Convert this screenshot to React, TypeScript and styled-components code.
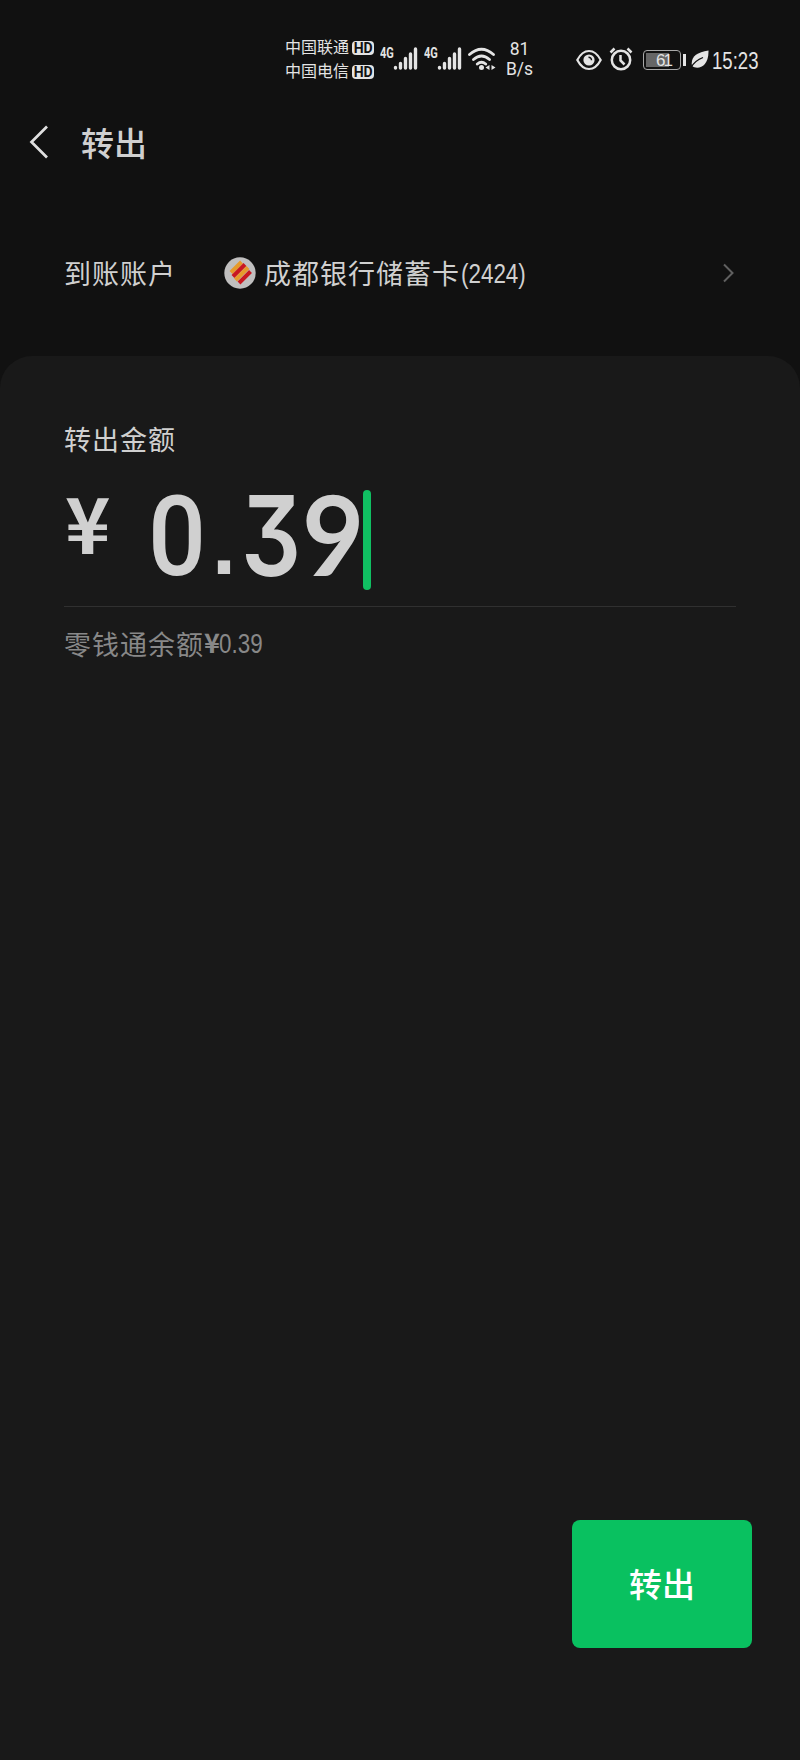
import React from 'react';
import styled, { createGlobalStyle } from 'styled-components';

const GlobalStyle = createGlobalStyle`
  * { box-sizing: border-box; }
  body {
    margin: 0;
    background: #111111;
    color: #d0d0d0;
    font-family: Roboto, "Noto Sans CJK SC", sans-serif;
  }
  svg { display: block; flex: none; }
`;

const Screen = styled.main`
  width: 800px;
  height: 1760px;
  display: flex;
  flex-direction: column;
  overflow: hidden;
  background: #111111;
`;

const StatusBar = styled.header`
  height: 104px;
  padding: 34px 0 0 285px;
  display: flex;
  align-items: flex-start;
  color: #e4e4e4;
`;

const Carriers = styled.div`
  width: 95px;
  padding-top: 2px;
  flex: none;
`;

const Carrier = styled.div`
  height: 24px;
  display: flex;
  align-items: center;
  gap: 3px;
  font-size: 16px;
  line-height: 24px;
  white-space: nowrap;
`;

const HdBadge = styled.span`
  width: 22px;
  height: 14px;
  margin-bottom: 1px;
  border-radius: 4px;
  background: #e4e4e4;
  color: #111111;
  font: 700 14px/15px Roboto, sans-serif;
  letter-spacing: -0.3px;
  text-align: center;
`;

const Signal = styled.div`
  width: 44px;
  height: 48px;
  display: flex;
  flex: none;
`;

const Network = styled.span`
  width: 13px;
  height: 12px;
  margin-top: 13px;
  font: 700 14.5px/14px Roboto, sans-serif;
  transform: scaleX(0.76);
  transform-origin: left;
`;

const Bars = styled.svg`
  margin-top: 13px;
`;

const Wifi = styled.svg`
  margin: 13px 0 0 0;
`;

const Rate = styled.div`
  width: 47px;
  margin-top: 5px;
  font: 400 17.5px/20px Roboto, sans-serif;
  text-align: center;
  flex: none;
`;

const DeviceState = styled.div`
  display: flex;
  align-items: center;
  height: 51px;
  margin-left: 33px;
`;

const AlarmIcon = styled.svg`
  margin: -1px 0 0 7px;
`;

const Battery = styled.div`
  width: 38px;
  height: 20px;
  margin-left: 10px;
  border: 1.5px solid #a8a8a8;
  border-radius: 4px;
  padding: 2px;
  flex: none;
`;

const Charge = styled.div`
  width: 23px;
  height: 100%;
  background: #666666;
`;

const ChargeValue = styled.span`
  display: block;
  padding-left: 10px;
  font: 400 17px/15px "Liberation Sans", sans-serif;
  white-space: nowrap;
  letter-spacing: -2px;
`;

const BatteryTip = styled.span`
  width: 3px;
  height: 12px;
  margin: 0 5px 0 2px;
  background: #e4e4e4;
  flex: none;
`;

const Clock = styled.time`
  width: 50px;
  margin: 3px 0 0 3px;
  font: 400 23.5px/26px "Liberation Sans", sans-serif;
  transform: scaleX(0.79);
  transform-origin: left;
`;

const TitleBar = styled.nav`
  height: 78px;
  padding-left: 28px;
  display: flex;
  align-items: center;
`;

const BackIcon = styled.svg`
  margin-top: -2px;
`;

const Title = styled.h1`
  margin: -3px 0 0 31px;
  font-size: 33px;
  line-height: 48px;
  font-weight: 500;
  font-family: "Noto Sans CJK SC", sans-serif;
`;

const AccountRow = styled.section`
  height: 174px;
  padding: 8px 66px 0 64px;
  display: flex;
  align-items: center;
`;

const Label = styled.div<{ $muted?: boolean }>`
  padding: 1px 0 2px;
  display: flex;
  align-items: center;
  font-size: 27px;
  line-height: 37px;
  letter-spacing: 1px;
  white-space: nowrap;
  font-family: "Noto Sans CJK SC", sans-serif;
  color: ${(p) => (p.$muted ? '#888888' : '#d0d0d0')};
`;

const AccountName = styled(Label)`
  margin-left: 8px;
  flex: 1;
`;

const Narrow = styled.span`
  display: inline-block;
  margin: 3px 0 0 1px;
  font-family: "Liberation Sans", sans-serif;
  letter-spacing: 0;
  transform: scaleX(0.83);
  transform-origin: left;
`;

const Yen = styled.span`
  width: 14px;
  margin-top: -3px;
  font-weight: 700;
  font-size: 27px;
  letter-spacing: 0;
`;

const BankLogo = styled.svg`
  margin-left: 48px;
`;

const Panel = styled.section`
  flex: 1;
  padding: 63px 64px 112px;
  display: flex;
  flex-direction: column;
  border-radius: 32px 32px 0 0;
  background: #191919;
`;

const AmountField = styled.div`
  height: 148px;
  margin-bottom: 15px;
  padding-top: 31px;
  display: flex;
  align-items: flex-start;
  border-bottom: 1px solid #303030;
`;

const Currency = styled.span`
  width: 83px;
  margin: -19px 0 0 1px;
  font: 700 77px/100px "Noto Sans CJK SC", sans-serif;
`;

const Digit = styled.span<{
  $width: number;
  $family: string;
  $weight: number;
  $scale: number;
  $top?: number;
  $size?: number;
}>`
  width: ${(p) => p.$width}px;
  margin-top: ${(p) => p.$top ?? 0}px;
  font-family: ${(p) => p.$family}, sans-serif;
  font-weight: ${(p) => p.$weight};
  font-size: ${(p) => p.$size ?? 111}px;
  line-height: 92px;
  font-feature-settings: "cv09" 1;
  transform: scaleX(${(p) => p.$scale});
  transform-origin: left;
  flex: none;
`;

const Caret = styled.span`
  width: 8px;
  height: 100px;
  border-radius: 4px;
  background: #10bf62;
`;

const Submit = styled.button`
  width: 180px;
  height: 128px;
  margin: auto -16px 0 auto;
  padding: 0 0 2px 0;
  border: 0;
  border-radius: 8px;
  background: #09c160;
  color: #ffffff;
  font: 500 33px/48px "Noto Sans CJK SC", sans-serif;
`;

const CellSignal = () => (
  <Signal>
    <Network>4G</Network>
    <Bars width="25" height="24" viewBox="0 0 25 24" stroke="#e4e4e4" strokeWidth="3.4" strokeLinecap="round">
      <path d="M2.5 20.5v.5M7.5 16.5V21M12.5 11.5V21M17.5 7V21M22.5 2V21" />
    </Bars>
  </Signal>
);

export default function App() {
  return (
    <>
      <GlobalStyle />
      <Screen>
        <StatusBar>
          <Carriers>
            <Carrier>中国联通<HdBadge>HD</HdBadge></Carrier>
            <Carrier>中国电信<HdBadge>HD</HdBadge></Carrier>
          </Carriers>
          <CellSignal />
          <CellSignal />
          <Wifi width="28" height="26" viewBox="0 0 28 26" fill="none" stroke="#e4e4e4" strokeWidth="2.8" strokeLinecap="round">
            <path d="M1.5 7.5Q13.5-3 25.5 7.5M5.5 12.5q8-7 16 0M9.3 17q4.2-3.6 8.4 0" />
            <circle cx="13.5" cy="20.5" r="2.5" fill="#e4e4e4" stroke="none" />
            <path d="M21.5 18v5l-4-2.5zM23.5 18v5l4-2.5z" fill="#e4e4e4" stroke="none" />
          </Wifi>
          <Rate>81<br />B/s</Rate>
          <DeviceState>
            <svg width="26" height="22" viewBox="0 0 26 22" fill="none" stroke="#e4e4e4" strokeWidth="2.2">
              <path d="M1.3 11Q6 2 13 2t11.7 9Q20 20 13 20T1.3 11z" />
              <circle cx="13" cy="11" r="5.6" fill="#e4e4e4" stroke="none" />
              <path d="M12.5 8.2a3 3 0 0 1 3 3" stroke="#111" strokeWidth="1.5" />
            </svg>
            <AlarmIcon width="24" height="24" viewBox="0 0 24 24" fill="none" stroke="#e4e4e4" strokeWidth="2.5">
              <circle cx="12" cy="13" r="9.2" />
              <path d="M1.5 5.5l4-4M18.5 1.5l4 4M11.5 8v5.5l4 4" />
            </AlarmIcon>
            <Battery><Charge><ChargeValue>61</ChargeValue></Charge></Battery>
            <BatteryTip />
            <svg width="18" height="19" viewBox="0 0 18 19">
              <path d="M17.5.5C5 2.500-.5 7 1 16c5 4 17 2 16.500-15.500z" fill="#e4e4e4" />
              <path d="M0 18Q3 11 12 7.5" fill="none" stroke="#111" strokeWidth="1.3" />
            </svg>
            <Clock>15:23</Clock>
          </DeviceState>
        </StatusBar>
        <TitleBar>
          <BackIcon width="22" height="36" viewBox="0 0 22 36" fill="none" stroke="#e0e0e0" strokeWidth="2.7">
            <path d="M19 2.5L3.500 18L19 33.500" />
          </BackIcon>
          <Title>转出</Title>
        </TitleBar>
        <AccountRow>
          <Label>到账账户</Label>
          <BankLogo width="32" height="32" viewBox="0 0 32 32">
            <circle cx="16" cy="16" r="15.7" fill="#c0bfbf" />
            <g strokeWidth="4">
              <path d="M7 15.5L17.5 5" stroke="#e69a2b" />
              <path d="M9 19.5L21 7.5" stroke="#c91820" />
              <path d="M11.5 23L24 10.5" stroke="#e69a2b" />
              <path d="M15 26L26.5 14.5" stroke="#c91820" />
            </g>
          </BankLogo>
          <AccountName>成都银行储蓄卡<Narrow>(2424)</Narrow></AccountName>
          <svg width="12" height="20" viewBox="0 0 12 20" fill="none" stroke="#606060" strokeWidth="2">
            <path d="M2 1.5L10.5 10L2 18.5" />
          </svg>
        </AccountRow>
        <Panel>
          <Label>转出金额</Label>
          <AmountField>
            <Currency>¥</Currency>
            <Digit $width={64} $family="Roboto" $weight={500} $scale={0.92} $top={1}>0</Digit>
            <Digit $width={29} $family="Liberation Sans" $weight={700} $scale={0.96} $top={7} $size={90}>.</Digit>
            <Digit $width={61} $family="Inter" $weight={600} $scale={0.85}>3</Digit>
            <Digit $width={61} $family="Lato" $weight={700} $scale={0.97} $top={-3}>9</Digit>
            <Caret />
          </AmountField>
          <Label $muted>零钱通余额<Yen>¥</Yen><Narrow>0.39</Narrow></Label>
          <Submit type="button">转出</Submit>
        </Panel>
      </Screen>
    </>
  );
}
